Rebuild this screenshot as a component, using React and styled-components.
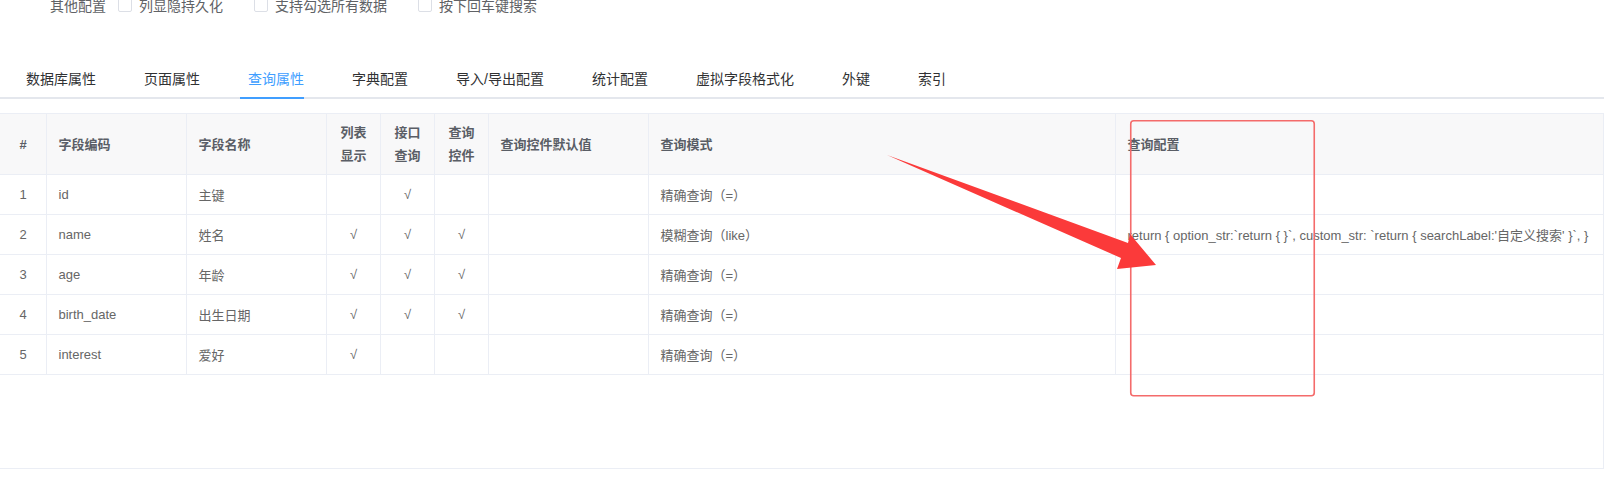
import React from "react";
import styled, { createGlobalStyle, css } from "styled-components";

const GlobalStyle = createGlobalStyle`
  html, body { margin: 0; padding: 0; background: #fff; overflow: hidden; }
  body { font-family: "Liberation Sans", "Noto Sans CJK SC", sans-serif; }
  * { box-sizing: border-box; }
`;

const Page = styled.div`
  position: relative;
  width: 1604px;
  height: 479px;
`;

const OptionsRow = styled.div`
  display: flex;
  align-items: center;
  height: 20px;
  margin-top: -5.5px;
  padding-left: 50px;
  font-size: 14px;
  color: #606266;
  white-space: nowrap;
`;

const OptionsLabel = styled.span`
  margin-right: 12px;
`;

const Option = styled.label`
  display: flex;
  align-items: center;
  gap: 7px;
  margin-right: 31px;
`;

const Box = styled.span`
  display: inline-block;
  width: 14px;
  height: 14px;
  border: 1px solid #dcdfe6;
  border-radius: 2px;
  background: #fff;
`;

const TabBar = styled.div`
  display: flex;
  gap: 48px;
  padding-left: 26px;
  margin-top: 44.5px;
  height: 40px;
  border-bottom: 2px solid #e4e7ed;
`;

const Tab = styled.div`
  position: relative;
  padding-top: 3px;
  font-size: 14px;
  line-height: 35px;
  white-space: nowrap;
  color: ${(p) => (p.$active ? "#409eff" : "#303133")};
  ${(p) =>
    p.$active &&
    css`
      &::after {
        content: "";
        position: absolute;
        left: -8px;
        right: 0;
        bottom: -2px;
        height: 2px;
        background: #409eff;
      }
    `}
`;

const TableWrap = styled.div`
  margin-top: 14px;
  height: 356px;
  border-top: 1px solid #ebeef5;
  border-bottom: 1px solid #ebeef5;
  border-right: 1px solid #ebeef5;
`;

const Table = styled.table`
  border-collapse: separate;
  border-spacing: 0;
  table-layout: fixed;
  width: 1603px;
  font-size: 13px;
  color: #606266;
`;

const HeadCell = styled.th`
  height: 61px;
  padding: 0 11.5px;
  background: #f8f8f9;
  border-bottom: 1px solid #ebeef5;
  border-right: ${(p) => (p.$last ? "none" : "1px solid #ebeef5")};
  text-align: ${(p) => (p.$center ? "center" : "left")};
  font-weight: 700;
  color: #5a5e66;
  line-height: 23px;
  vertical-align: middle;
  white-space: nowrap;
`;

const Cell = styled.td`
  height: 40px;
  padding: 0 11.5px;
  border-bottom: 1px solid #ebeef5;
  border-right: ${(p) => (p.$last ? "none" : "1px solid #ebeef5")};
  text-align: ${(p) => (p.$center ? "center" : "left")};
  vertical-align: middle;
  white-space: nowrap;
  overflow: visible;
  color: #666;
`;

const Overlay = styled.svg`
  position: absolute;
  left: 0;
  top: 0;
  pointer-events: none;
`;

const tabs = ["数据库属性", "页面属性", "查询属性", "字典配置", "导入/导出配置", "统计配置", "虚拟字段格式化", "外键", "索引"];

const cols = [
  { w: 47, title: "#", center: true },
  { w: 140, title: "字段编码" },
  { w: 140, title: "字段名称" },
  { w: 54, title: ["列表", "显示"], center: true },
  { w: 54, title: ["接口", "查询"], center: true },
  { w: 54, title: ["查询", "控件"], center: true },
  { w: 160, title: "查询控件默认值" },
  { w: 467, title: "查询模式" },
  { w: 487, title: "查询配置" },
];

const CFG = "return { option_str:`return { }`, custom_str: `return { searchLabel:'自定义搜索' }`, }";

const rows = [
  ["1", "id", "主键", "", "√", "", "", "精确查询（=）", ""],
  ["2", "name", "姓名", "√", "√", "√", "", "模糊查询（like）", CFG],
  ["3", "age", "年龄", "√", "√", "√", "", "精确查询（=）", ""],
  ["4", "birth_date", "出生日期", "√", "√", "√", "", "精确查询（=）", ""],
  ["5", "interest", "爱好", "√", "", "", "", "精确查询（=）", ""],
];

export default function App() {
  return (
    <>
      <GlobalStyle />
      <Page>
        <OptionsRow>
          <OptionsLabel>其他配置</OptionsLabel>
          <Option><Box />列显隐持久化</Option>
          <Option><Box />支持勾选所有数据</Option>
          <Option><Box />按下回车键搜索</Option>
        </OptionsRow>
        <TabBar>
          {tabs.map((t) => (
            <Tab key={t} $active={t === "查询属性"}>{t}</Tab>
          ))}
        </TabBar>
        <TableWrap>
          <Table>
            <colgroup>
              {cols.map((c, i) => (
                <col key={i} style={{ width: c.w }} />
              ))}
            </colgroup>
            <thead>
              <tr>
                {cols.map((c, i) => (
                  <HeadCell key={i} $center={c.center} $last={i === cols.length - 1}>
                    {Array.isArray(c.title) ? (
                      <>
                        {c.title[0]}
                        <br />
                        {c.title[1]}
                      </>
                    ) : (
                      c.title
                    )}
                  </HeadCell>
                ))}
              </tr>
            </thead>
            <tbody>
              {rows.map((r, ri) => (
                <tr key={ri}>
                  {r.map((v, ci) => (
                    <Cell key={ci} $center={cols[ci].center} $last={ci === cols.length - 1}>
                      {v}
                    </Cell>
                  ))}
                </tr>
              ))}
            </tbody>
          </Table>
        </TableWrap>
        <Overlay width="1617" height="479" viewBox="0 0 1617 479">
          <rect x="1130.75" y="125.75" width="183.5" height="275" rx="3" fill="none" stroke="#f46b6b" strokeWidth="1.6" />
          <polygon
            points="887,160 1128,248 1130,239 1156,270 1117,274 1121,263"
            fill="#fb3a3a"
          />
        </Overlay>
      </Page>
    </>
  );
}
